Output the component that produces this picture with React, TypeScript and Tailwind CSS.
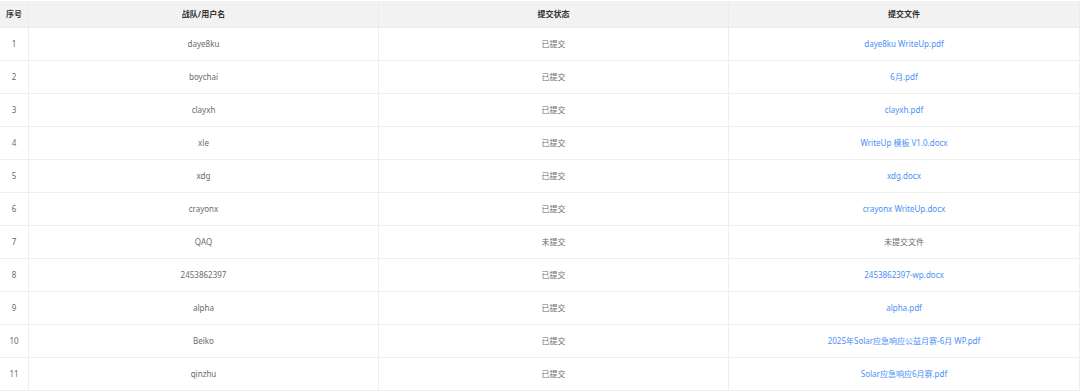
import React from "react";

type Row = { name: string; status: string; file: string; submitted: boolean };

const rows: Row[] = [
  { name: "daye8ku", status: "已提交", file: "daye8ku WriteUp.pdf", submitted: true },
  { name: "boychai", status: "已提交", file: "6月.pdf", submitted: true },
  { name: "clayxh", status: "已提交", file: "clayxh.pdf", submitted: true },
  { name: "xle", status: "已提交", file: "WriteUp 模板 V1.0.docx", submitted: true },
  { name: "xdg", status: "已提交", file: "xdg.docx", submitted: true },
  { name: "crayonx", status: "已提交", file: "crayonx WriteUp.docx", submitted: true },
  { name: "QAQ", status: "未提交", file: "未提交文件", submitted: false },
  { name: "2453862397", status: "已提交", file: "2453862397-wp.docx", submitted: true },
  { name: "alpha", status: "已提交", file: "alpha.pdf", submitted: true },
  { name: "Beiko", status: "已提交", file: "2025年Solar应急响应公益月赛-6月 WP.pdf", submitted: true },
  { name: "qinzhu", status: "已提交", file: "Solar应急响应6月赛.pdf", submitted: true },
];

const font = { fontFamily: '"Noto Sans", "Noto Sans CJK SC", sans-serif' };

export default function App() {
  return (
    <div className="w-[1080px] h-[391px] overflow-hidden bg-white text-[8px] pt-px" style={font}>
      <div className="grid grid-cols-[29px_350px_350px_351px] h-[27px] bg-[#f2f2f2] font-bold text-[#333] border-b border-[#ececec]">
        <div className="flex items-center justify-center border-r border-[#ececec]">序号</div>
        <div className="flex items-center justify-center border-r border-[#ececec]">战队/用户名</div>
        <div className="flex items-center justify-center border-r border-[#ececec]">提交状态</div>
        <div className="flex items-center justify-center border-r border-[#ececec]">提交文件</div>
      </div>
      {rows.map((r, i) => (
        <div key={i} className="grid grid-cols-[29px_350px_350px_351px] h-[33px] border-b border-[#eeeeee] text-[#6b6b6b]">
          <div className="flex items-center justify-center border-r border-[#eeeeee]">{i + 1}</div>
          <div className="flex items-center justify-center border-r border-[#eeeeee]">{r.name}</div>
          <div className="flex items-center justify-center border-r border-[#eeeeee]">{r.status}</div>
          <div className={`flex items-center justify-center border-r border-[#eeeeee] ${r.submitted ? "text-[#4a8ff5]" : "text-[#6b6b6b]"}`}>
            {r.file}
          </div>
        </div>
      ))}
      <div className="grid grid-cols-[29px_350px_350px_351px] h-[33px]">
        <div className="border-r border-[#eeeeee]" />
        <div className="border-r border-[#eeeeee]" />
        <div className="border-r border-[#eeeeee]" />
        <div className="border-r border-[#eeeeee]" />
      </div>
    </div>
  );
}
